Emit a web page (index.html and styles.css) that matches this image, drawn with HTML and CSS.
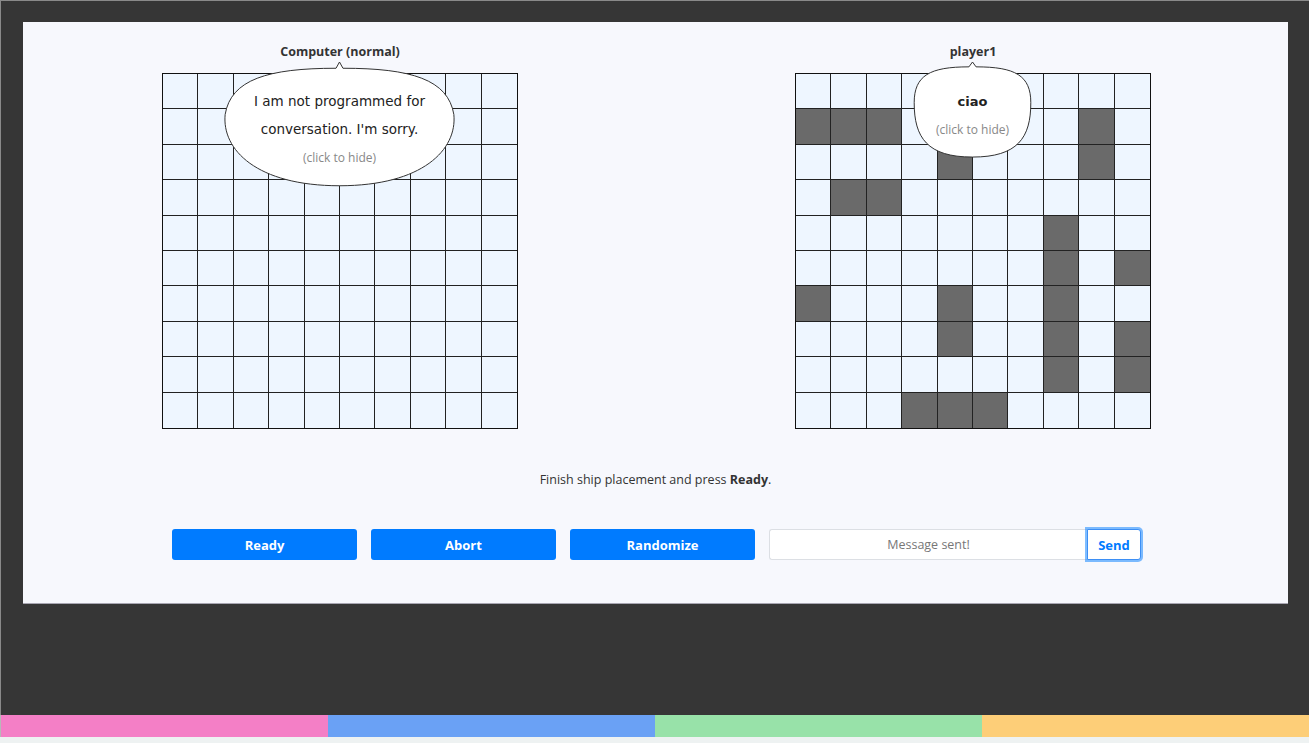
FILE: index.html
```html
<!DOCTYPE html>
<html>
<head>
<meta charset="utf-8">
<link rel="stylesheet" href="styles.css">
</head>
<body>
<div class="page">
  <div class="frame">
    <div class="panel">
      <div class="boards">
        <div class="board">
          <div class="title">Computer (normal)</div>
          <div class="grid">
            <div class="c"></div><div class="c"></div><div class="c"></div><div class="c"></div><div class="c"></div><div class="c"></div><div class="c"></div><div class="c"></div><div class="c"></div><div class="c"></div>
            <div class="c"></div><div class="c"></div><div class="c"></div><div class="c"></div><div class="c"></div><div class="c"></div><div class="c"></div><div class="c"></div><div class="c"></div><div class="c"></div>
            <div class="c"></div><div class="c"></div><div class="c"></div><div class="c"></div><div class="c"></div><div class="c"></div><div class="c"></div><div class="c"></div><div class="c"></div><div class="c"></div>
            <div class="c"></div><div class="c"></div><div class="c"></div><div class="c"></div><div class="c"></div><div class="c"></div><div class="c"></div><div class="c"></div><div class="c"></div><div class="c"></div>
            <div class="c"></div><div class="c"></div><div class="c"></div><div class="c"></div><div class="c"></div><div class="c"></div><div class="c"></div><div class="c"></div><div class="c"></div><div class="c"></div>
            <div class="c"></div><div class="c"></div><div class="c"></div><div class="c"></div><div class="c"></div><div class="c"></div><div class="c"></div><div class="c"></div><div class="c"></div><div class="c"></div>
            <div class="c"></div><div class="c"></div><div class="c"></div><div class="c"></div><div class="c"></div><div class="c"></div><div class="c"></div><div class="c"></div><div class="c"></div><div class="c"></div>
            <div class="c"></div><div class="c"></div><div class="c"></div><div class="c"></div><div class="c"></div><div class="c"></div><div class="c"></div><div class="c"></div><div class="c"></div><div class="c"></div>
            <div class="c"></div><div class="c"></div><div class="c"></div><div class="c"></div><div class="c"></div><div class="c"></div><div class="c"></div><div class="c"></div><div class="c"></div><div class="c"></div>
            <div class="c"></div><div class="c"></div><div class="c"></div><div class="c"></div><div class="c"></div><div class="c"></div><div class="c"></div><div class="c"></div><div class="c"></div><div class="c"></div>
          </div>
          <div class="bubble bubble-wide">
            <svg class="bubble-shape" viewBox="0 0 100 100" preserveAspectRatio="none"><path d="M48.5,5 L50,0 L51.5,5 C81,5 97,14 99.5,42 C101,70 86,99 50,99 C14,99 -1,70 0.5,42 C3,14 19,5 48.5,5 Z" vector-effect="non-scaling-stroke"/></svg>
            <div class="bubble-text">
              <div class="say">I am not programmed for<br>conversation. I'm sorry.</div>
              <div class="hint">(click to hide)</div>
            </div>
          </div>
        </div>
        <div class="board">
          <div class="title">player1</div>
          <div class="grid">
            <div class="c"></div><div class="c"></div><div class="c"></div><div class="c"></div><div class="c"></div><div class="c"></div><div class="c"></div><div class="c"></div><div class="c"></div><div class="c"></div>
            <div class="c s"></div><div class="c s"></div><div class="c s"></div><div class="c"></div><div class="c s"></div><div class="c"></div><div class="c"></div><div class="c"></div><div class="c s"></div><div class="c"></div>
            <div class="c"></div><div class="c"></div><div class="c"></div><div class="c"></div><div class="c s"></div><div class="c"></div><div class="c"></div><div class="c"></div><div class="c s"></div><div class="c"></div>
            <div class="c"></div><div class="c s"></div><div class="c s"></div><div class="c"></div><div class="c"></div><div class="c"></div><div class="c"></div><div class="c"></div><div class="c"></div><div class="c"></div>
            <div class="c"></div><div class="c"></div><div class="c"></div><div class="c"></div><div class="c"></div><div class="c"></div><div class="c"></div><div class="c s"></div><div class="c"></div><div class="c"></div>
            <div class="c"></div><div class="c"></div><div class="c"></div><div class="c"></div><div class="c"></div><div class="c"></div><div class="c"></div><div class="c s"></div><div class="c"></div><div class="c s"></div>
            <div class="c s"></div><div class="c"></div><div class="c"></div><div class="c"></div><div class="c s"></div><div class="c"></div><div class="c"></div><div class="c s"></div><div class="c"></div><div class="c"></div>
            <div class="c"></div><div class="c"></div><div class="c"></div><div class="c"></div><div class="c s"></div><div class="c"></div><div class="c"></div><div class="c s"></div><div class="c"></div><div class="c s"></div>
            <div class="c"></div><div class="c"></div><div class="c"></div><div class="c"></div><div class="c"></div><div class="c"></div><div class="c"></div><div class="c s"></div><div class="c"></div><div class="c s"></div>
            <div class="c"></div><div class="c"></div><div class="c"></div><div class="c s"></div><div class="c s"></div><div class="c s"></div><div class="c"></div><div class="c"></div><div class="c"></div><div class="c"></div>
          </div>
          <div class="bubble bubble-small">
            <svg class="bubble-shape" viewBox="0 0 100 100" preserveAspectRatio="none"><path d="M47,5 L50,0 L53,5 C86,5 99,14 99,42 C99,78 88,98 50,98 C12,98 1,78 1,42 C1,14 14,5 47,5 Z" vector-effect="non-scaling-stroke"/></svg>
            <div class="bubble-text">
              <div class="say say-bold">ciao</div>
              <div class="hint">(click to hide)</div>
            </div>
          </div>
        </div>
      </div>
      <div class="status">Finish ship placement and press <b>Ready</b>.</div>
      <div class="controls">
        <button class="btn">Ready</button>
        <button class="btn">Abort</button>
        <button class="btn">Randomize</button>
        <div class="chat">
          <input class="chat-input" type="text" placeholder="Message sent!">
          <button class="send">Send</button>
        </div>
      </div>
    </div>
  </div>
  <div class="stripe">
    <div class="seg pink"></div>
    <div class="seg blue"></div>
    <div class="seg green"></div>
    <div class="seg yellow"></div>
  </div>
</div>
</body>
</html>
```

FILE: styles.css
```css
* { box-sizing: border-box; }

html, body {
  margin: 0;
  padding: 0;
  background: #eef2f2;
  font-family: "Open Sans", "Noto Sans", Arial, sans-serif;
  color: #333;
}

.page {
  width: 1309px;
  height: 743px;
  overflow: hidden;
}

.frame {
  height: 715px;
  background: #363636;
  border-top: 1px solid #8a8a8a;
  border-left: 1px solid #8a8a8a;
  padding: 21px 21px 0 22px;
}

.panel {
  background: #f7f8fd;
  border-bottom: 1px solid #a8a6b2;
  height: 582px;
  padding-top: 21px;
}

.boards {
  display: flex;
  gap: 1px;
  padding-left: 1px;
}

.board {
  flex: 0 0 632px;
  display: flex;
  flex-direction: column;
  align-items: center;
  position: relative;
}

.title {
  font-size: 12.5px;
  font-weight: 700;
  line-height: 18px;
  margin-bottom: 12px;
  color: #333;
}

.grid {
  width: 356px;
  height: 356px;
  display: grid;
  grid-template-columns: repeat(10, 1fr);
  grid-template-rows: repeat(10, 1fr);
  border: 1px solid #111;
  background: #eef6ff;
}

.c {
  background: #eef6ff;
  border-right: 1px solid #222;
  border-bottom: 1px solid #222;
}
.c:nth-child(10n) { border-right: none; }
.c:nth-child(n+91) { border-bottom: none; }

.c.s { background: #6a6a6a; }

.bubble {
  position: absolute;
  top: 19px;
  left: 50%;
}

.bubble-wide {
  width: 231px;
  height: 125px;
  margin-left: -116px;
}

.bubble-small {
  width: 119px;
  height: 97px;
  margin-left: -60px;
}

.bubble-shape {
  position: absolute;
  inset: 0;
  width: 100%;
  height: 100%;
  overflow: visible;
}

.bubble-shape path {
  fill: #fff;
  stroke: #333;
  stroke-width: 1;
}

.bubble-text {
  position: relative;
  text-align: center;
}

.bubble-wide .bubble-text { padding-top: 25px; }
.bubble-small .bubble-text { padding-top: 26px; }

.say {
  font-family: "DejaVu Sans", sans-serif;
  font-size: 13.5px;
  line-height: 28px;
  color: #222;
}

.say-bold {
  font-weight: 700;
  font-size: 13px;
}

.hint {
  font-size: 12px;
  line-height: 16px;
  color: #888;
  margin-top: 7px;
}
.bubble-small .hint { margin-top: 6px; }

.status {
  text-align: center;
  font-size: 12.5px;
  line-height: 18px;
  margin-top: 42px;
  color: #333;
}

.controls {
  display: flex;
  justify-content: center;
  gap: 14px;
  margin-top: 40px;
  padding-left: 2px;
}

.btn {
  width: 185px;
  height: 31px;
  background: #007bff;
  color: #fff;
  border: none;
  border-radius: 3px;
  font-family: "Open Sans", "Noto Sans", Arial, sans-serif;
  font-size: 13px;
  font-weight: 700;
  padding: 0;
}

.chat {
  display: flex;
  height: 31px;
}

.chat-input {
  width: 318px;
  height: 31px;
  border: 1px solid #dcdfe4;
  border-right: none;
  border-radius: 3px 0 0 3px;
  background: #fff;
  text-align: center;
  font-family: "Open Sans", "Noto Sans", Arial, sans-serif;
  font-size: 12.5px;
  padding: 0 8px;
  outline: none;
}
.chat-input::placeholder { color: #777; }

.send {
  width: 54px;
  height: 31px;
  background: #fff;
  color: #007bff;
  border: 1px solid #3d8ff5;
  border-radius: 0 3px 3px 0;
  box-shadow: 0 0 0 2px rgba(0, 123, 255, 0.5);
  font-family: "Open Sans", "Noto Sans", Arial, sans-serif;
  font-size: 13px;
  font-weight: 700;
  padding: 0;
}

.stripe {
  display: flex;
  height: 22px;
  border-left: 1px solid #b8b8b8;
}

.seg { flex: 1; }
.pink { background: #f47fc6; }
.blue { background: #6aa1f5; }
.green { background: #98e2a9; }
.yellow { background: #fdce78; }
```
